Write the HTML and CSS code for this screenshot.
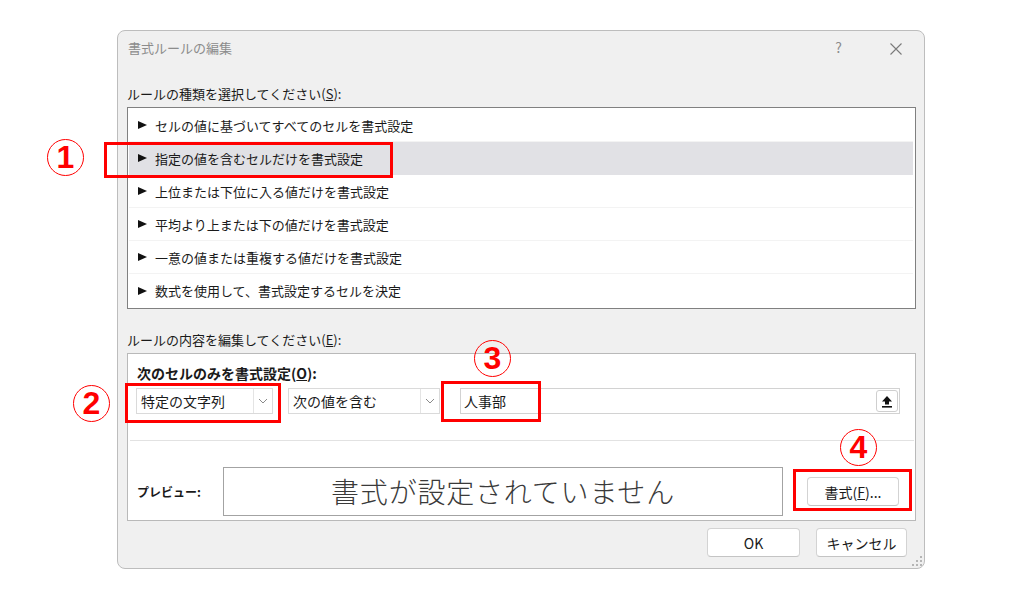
FILE: index.html
```html
<!DOCTYPE html>
<html lang="ja">
  <head>
    <meta charset="UTF-8" />
    <title>書式ルールの編集</title>
    <link rel="stylesheet" href="styles.css">
  </head>
  <body>
    <div class="page">
      <div class="dialog">
        <div class="title-bar">
          <span class="title">書式ルールの編集</span>
          <span class="help">?</span>
          <span class="close">
            <svg width="14" height="14" viewBox="0 0 14 14"><path d="M1.5 1.5 L12.5 12.5 M12.5 1.5 L1.5 12.5" stroke="#7a7a7a" stroke-width="1.1" fill="none"/></svg>
          </span>
        </div>

        <div class="section-label">ルールの種類を選択してください(<u>S</u>):</div>
        <ul class="rule-list">
          <li class="rule"><span class="arrow"></span>セルの値に基づいてすべてのセルを書式設定</li>
          <li class="rule selected"><span class="arrow"></span>指定の値を含むセルだけを書式設定</li>
          <li class="rule"><span class="arrow"></span>上位または下位に入る値だけを書式設定</li>
          <li class="rule"><span class="arrow"></span>平均より上または下の値だけを書式設定</li>
          <li class="rule"><span class="arrow"></span>一意の値または重複する値だけを書式設定</li>
          <li class="rule"><span class="arrow"></span>数式を使用して、書式設定するセルを決定</li>
        </ul>

        <div class="section-label">ルールの内容を編集してください(<u>E</u>):</div>
        <div class="edit-box">
          <div class="edit-top">
            <div class="edit-title">次のセルのみを書式設定(<u>O</u>):</div>
            <div class="condition-row">
              <div class="combo combo-type">
                <span class="combo-text">特定の文字列</span>
                <span class="combo-btn"><svg width="10" height="6" viewBox="0 0 10 6"><path d="M1 1 L5 5 L9 1" stroke="#8a8a8a" fill="none"/></svg></span>
              </div>
              <div class="combo combo-op">
                <span class="combo-text">次の値を含む</span>
                <span class="combo-btn"><svg width="10" height="6" viewBox="0 0 10 6"><path d="M1 1 L5 5 L9 1" stroke="#8a8a8a" fill="none"/></svg></span>
              </div>
              <div class="text-field">
                <span class="field-text">人事部</span>
                <span class="ref-btn"><svg width="12" height="13" viewBox="0 0 12 13"><path d="M6 1 L11 6.5 H8 V9.5 H4 V6.5 H1 Z" fill="#111"/><rect x="1" y="11" width="10" height="1.6" fill="#111"/></svg></span>
              </div>
            </div>
          </div>
          <div class="preview-row">
            <span class="preview-label">プレビュー:</span>
            <div class="preview-box">書式が設定されていません</div>
            <button class="btn btn-format">書式(<u>F</u>)...</button>
          </div>
        </div>

        <div class="dialog-buttons">
          <button class="btn btn-ok">OK</button>
          <button class="btn btn-cancel">キャンセル</button>
        </div>

        <span class="grip">
          <svg width="10" height="10" viewBox="0 0 10 10" fill="#b5b5b5"><rect x="8" y="0" width="2" height="2"/><rect x="4" y="4" width="2" height="2"/><rect x="8" y="4" width="2" height="2"/><rect x="0" y="8" width="2" height="2"/><rect x="4" y="8" width="2" height="2"/><rect x="8" y="8" width="2" height="2"/></svg>
        </span>
      </div>

      <!-- 注釈 -->
      <div class="mark mark-1"></div>
      <div class="mark mark-2"></div>
      <div class="mark mark-3"></div>
      <div class="mark mark-4"></div>
      <span class="num num-1">1</span>
      <span class="num num-2">2</span>
      <span class="num num-3">3</span>
      <span class="num num-4">4</span>
    </div>
  </body>
</html>
```

FILE: styles.css
```css
:root {
  --dialog-bg: #f0f0f0;
  --text-color: #1a1a1a;
  --mark-red: #ff0000;
  --line-light: #ececec;
}

* {
  margin: 0;
  padding: 0;
  box-sizing: border-box;
  font-family: "Noto Sans CJK JP", "Noto Sans", sans-serif;
}

body {
  background-color: #fff;
  color: var(--text-color);
}

.page {
  position: relative;
  width: 1024px;
  height: 605px;
  overflow: hidden;
}

.dialog {
  position: relative;
  width: 808px;
  height: 539px;
  margin: 30px 0 0 117px;
  padding: 0 8px 0 9px;
  background-color: var(--dialog-bg);
  border: 1px solid #bdbdbd;
  border-radius: 8px;
}

.title-bar {
  display: flex;
  align-items: center;
  height: 32px;
  font-size: 13px;
  color: #8c8c8c;
}

.title {
  margin-left: 1px;
}

.help {
  margin-left: auto;
  font-size: 14px;
  color: #8c8c8c;
}

.close {
  display: flex;
  margin: 3px 13px 0 47px;
}

.section-label {
  margin-top: 21px;
  height: 20px;
  line-height: 20px;
  font-size: 13px;
}

.rule-list {
  list-style: none;
  margin-top: 3px;
  padding: 1px 2px 1px 1px;
  background-color: #fff;
  border: 1px solid #808080;
}

.rule {
  display: flex;
  align-items: center;
  height: 33px;
  padding-left: 9px;
  font-size: 13px;
  border-bottom: 1px solid #f3f3f3;
}

.rule:last-child {
  border-bottom: none;
}

.rule.selected {
  background-color: #e1e1e5;
  border-bottom-color: #e1e1e5;
}

.arrow {
  width: 0;
  height: 0;
  margin-right: 8px;
  border-top: 4px solid transparent;
  border-bottom: 4px solid transparent;
  border-left: 9px solid #111;
}

.edit-box {
  margin-top: 3px;
  background-color: #fff;
  border: 1px solid #b9b9b9;
}

.edit-top {
  padding: 9px 15px 26px 8px;
}

.edit-title {
  height: 20px;
  line-height: 20px;
  margin-left: 1px;
  font-size: 14px;
  font-weight: bold;
}

.condition-row {
  display: flex;
  margin-top: 5px;
  height: 26px;
}

.combo {
  display: flex;
  align-items: center;
  border: 1px solid #dadada;
  font-size: 14px;
}

.combo-type {
  width: 137px;
  margin-right: 15px;
}

.combo-op {
  width: 152px;
  margin-right: 20px;
}

.combo-text {
  flex: 1;
  padding-left: 4px;
}

.combo-btn {
  display: flex;
  align-items: center;
  justify-content: center;
  width: 19px;
  height: 100%;
  border-left: 1px solid #e4e4e4;
}

.text-field {
  display: flex;
  align-items: center;
  width: 440px;
  padding-right: 1px;
  border: 1px solid #d2d2d2;
  font-size: 14px;
}

.field-text {
  flex: 1;
  padding-left: 3px;
}

.ref-btn {
  display: flex;
  align-items: center;
  justify-content: center;
  width: 22px;
  height: 22px;
  border: 1px solid #cfcfcf;
  border-radius: 3px;
}

.preview-row {
  display: flex;
  align-items: center;
  margin: 0 1px 0 2px;
  padding: 26px 0 4px 7px;
  border-top: 1px solid #e2e2e2;
}

.preview-label {
  width: 86px;
  font-size: 12px;
  font-weight: bold;
}

.preview-box {
  width: 560px;
  height: 49px;
  line-height: 47px;
  text-align: center;
  font-size: 28px;
  font-weight: 300;
  letter-spacing: 0.8px;
  color: #3a3a3a;
  border: 1px solid #a3a3a3;
}

.btn {
  height: 29px;
  background-color: #fff;
  border: 1px solid #d3d3d3;
  border-bottom-color: #c4c4c4;
  border-radius: 4px;
  font-size: 14px;
  color: var(--text-color);
}

.btn-format {
  width: 92px;
  margin-left: 24px;
}

.dialog-buttons {
  display: flex;
  justify-content: flex-end;
  gap: 16px;
  margin-top: 7px;
  padding-right: 9px;
}

.btn-ok {
  width: 93px;
}

.btn-cancel {
  width: 91px;
}

.grip {
  position: absolute;
  right: 2px;
  bottom: 2px;
  display: flex;
}

/* 注釈 */
.mark {
  position: absolute;
  border: 3px solid var(--mark-red);
}

.mark-1 { left: 104px; top: 142px; width: 289px; height: 36px; }
.mark-2 { left: 125px; top: 383px; width: 156px; height: 40px; }
.mark-3 { left: 441px; top: 381px; width: 100px; height: 41px; }
.mark-4 { left: 793px; top: 469px; width: 119px; height: 42px; }

.num {
  position: absolute;
  display: flex;
  align-items: center;
  justify-content: center;
  width: 37px;
  height: 37px;
  border: 1.5px solid var(--mark-red);
  border-radius: 50%;
  color: var(--mark-red);
  font-family: "Liberation Sans", sans-serif;
  font-size: 32px;
  font-weight: bold;
}

.num-1 { left: 47px; top: 139px; }
.num-2 { left: 73px; top: 385px; }
.num-3 { left: 474px; top: 340px; }
.num-4 { left: 840px; top: 429px; }
```
